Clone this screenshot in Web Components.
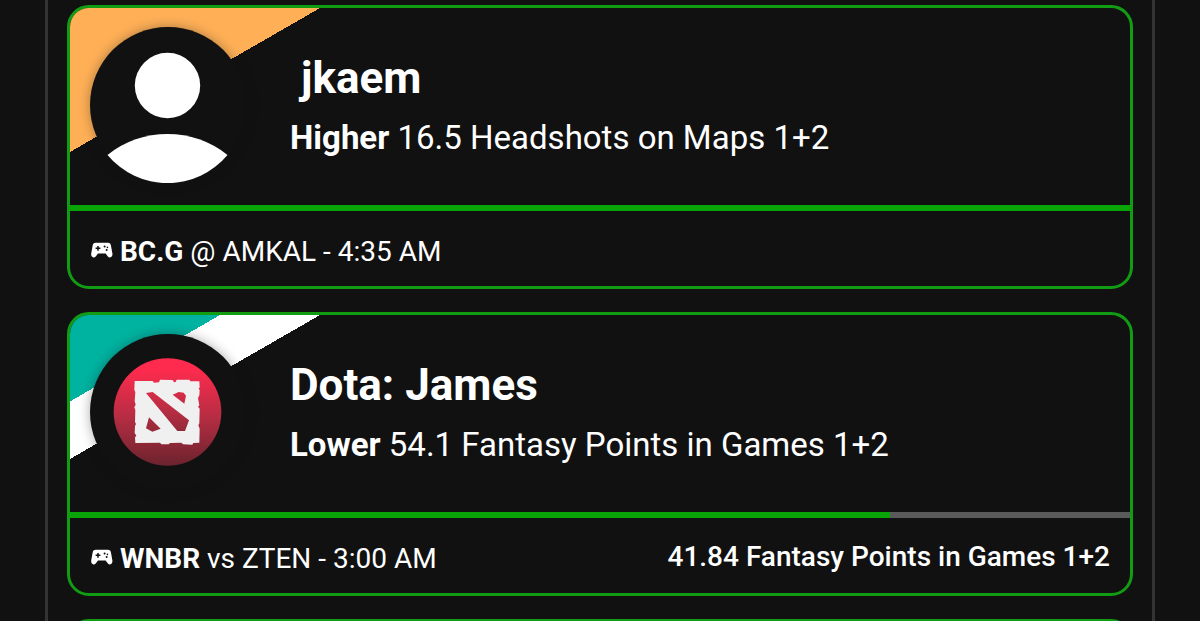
<!DOCTYPE html>
<html lang="en">
<head>
<meta charset="utf-8">
<title>Picks</title>
<style>
    body {
        margin: 0;
        height: 100vh;
        overflow: hidden;
        background: #111;
        color: #fff;
        font-family: Roboto, "Liberation Sans", sans-serif;
    }
</style>
</head>
<body>
<pick-list>
    <pick-card style="--banner: #ffb057; --banner-alt: #ffb057">
        <user-avatar slot="avatar"></user-avatar>
        <span slot="name">&nbsp;jkaem</span>
        <b slot="choice">Higher</b>
        <span slot="line">16.5 Headshots on Maps 1+2</span>
        <match-info slot="match"><b>BC.G</b> @ AMKAL - 4:35 AM</match-info>
    </pick-card>
    <pick-card value="41.84" max="54.1" style="--banner: #00b3a1; --banner-alt: #fff">
        <dota-avatar slot="avatar"></dota-avatar>
        <span slot="name">Dota: James</span>
        <b slot="choice">Lower</b>
        <span slot="line">54.1 Fantasy Points in Games 1+2</span>
        <match-info slot="match"><b>WNBR</b> vs ZTEN - 3:00 AM</match-info>
        <span slot="result">41.84 Fantasy Points in Games 1+2</span>
    </pick-card>
    <pick-card></pick-card>
</pick-list>

<script>
class PickList extends HTMLElement {
    constructor(){
        super();
        this.attachShadow({mode: 'open'});
        this.shadowRoot.innerHTML = `
            <style>
                :host {
                    display: flex;
                    flex-direction: column;
                    gap: 23px;
                    margin: 0 45px;
                    padding: 5px 19px;
                    border: solid #333;
                    border-width: 0 3px;
                }
            </style>
            <slot></slot>
        `;
    }
}

class PickCard extends HTMLElement {
    constructor(){
        super();
        this.attachShadow({mode: 'open'});
        this.shadowRoot.innerHTML = `
            <style>
                :host {
                    display: block;
                    overflow: hidden;
                    border: 3px solid #129c14;
                    border-radius: 22px;
                }

                #head {
                    display: flex;
                    align-items: center;
                    gap: 44px;
                    padding: 19px 20px 22px;
                    background: linear-gradient(to bottom right, var(--banner, transparent) 30%, var(--banner-alt, transparent) 30% 50%, transparent 50%) no-repeat 0 0 / 250px 144px;
                }

                #avatar {
                    flex: none;
                    width: 156px;
                    height: 156px;
                    border-radius: 50%;
                    background: #111;
                    box-shadow: 0 0 12px rgba(17, 17, 17, 0.35);
                }

                #text {
                    display: flex;
                    flex-direction: column;
                    gap: 14px;
                }

                h2 {
                    margin: 0;
                    font-size: 44px;
                    line-height: 52px;
                    font-weight: 700;
                }

                p {
                    margin: 0;
                    font-size: 33px;
                    line-height: 40px;
                }

                progress {
                    display: block;
                    appearance: none;
                    width: 100%;
                    height: 6px;
                    border: 0;
                }

                progress::-webkit-progress-bar {
                    background: #5a5a5a;
                }

                progress::-webkit-progress-value {
                    background: #08a408;
                }

                footer {
                    display: flex;
                    justify-content: space-between;
                    align-items: flex-start;
                    padding: 24px 20px 18px;
                    font-size: 28px;
                    line-height: 33px;
                }

                #result {
                    font-weight: 500;
                    line-height: 30px;
                }
            </style>
            <div id="head">
                <div id="avatar"><slot name="avatar"></slot></div>
                <div id="text">
                    <h2><slot name="name"></slot></h2>
                    <p><slot name="choice"></slot> <slot name="line"></slot></p>
                </div>
            </div>
            <progress aria-label="Progress"></progress>
            <footer>
                <slot name="match"></slot>
                <div id="result"><slot name="result"></slot></div>
            </footer>
        `;
    }

    connectedCallback(){
        const bar = this.shadowRoot.querySelector('progress');
        bar.max = this.getAttribute('max') || 1;
        bar.value = this.getAttribute('value') || 1;
    }
}

class UserAvatar extends HTMLElement {
    constructor(){
        super();
        this.attachShadow({mode: 'open'});
        this.shadowRoot.innerHTML = `
            <style>
                :host, svg {
                    display: block;
                }
            </style>
            <svg viewBox="0 0 156 156" fill="#fff">
                <circle cx="77.5" cy="58.5" r="32.7"/>
                <path d="M17.5 128A96 96 0 0 1 137.5 128A78 78 0 0 1 17.5 128Z"/>
            </svg>
        `;
    }
}

class DotaAvatar extends HTMLElement {
    constructor(){
        super();
        this.attachShadow({mode: 'open'});
        this.shadowRoot.innerHTML = `
            <style>
                :host, svg {
                    display: block;
                }
            </style>
            <svg viewBox="-30 -48 468 468">
                <defs>
                    <linearGradient id="red" x1="0" y1="0" x2="0" y2="1">
                        <stop offset="0.1" stop-color="#ff2b4e"/>
                        <stop offset="0.55" stop-color="#b52d42"/>
                        <stop offset="1" stop-color="#6b232d"/>
                    </linearGradient>
                    <linearGradient id="hole" gradientUnits="userSpaceOnUse" x1="0" y1="126" x2="0" y2="245">
                        <stop offset="0" stop-color="#d82c48"/>
                        <stop offset="0.5" stop-color="#b52d42"/>
                        <stop offset="1" stop-color="#932a39"/>
                    </linearGradient>
                </defs>
                <circle cx="202.5" cy="186" r="161.5" fill="url(#red)"/>
                <path fill="#f0f0f0" d="M104 93L158 93L162 98L177 97L180 89L218 90L222 97L227 96L230 89L268 89L271 94L298 94L299 112L296 116L299 120L298 136L294 144L298 166L294 170L299 176L298 220L295 226L299 236L298 278L280 279L277 284L249 283L244 278L210 279L206 283L184 283L180 278L106 279L105 262L109 257L104 249L105 228L108 222L105 216L106 180L103 172L107 164L104 154L106 126L103 120Z"/>
                <g fill="url(#hole)">
                    <path d="M138 129L158 126L267 211L255 243L232 243Z"/>
                    <path d="M218 134L236 126L251 128L258 137L253 161Z"/>
                    <path d="M147 202L182 236L157 245L138 235Z"/>
                </g>
            </svg>
        `;
    }
}

class MatchInfo extends HTMLElement {
    constructor(){
        super();
        this.attachShadow({mode: 'open'});
        this.shadowRoot.innerHTML = `
            <style>
                :host {
                    display: flex;
                    gap: 7px;
                }

                svg {
                    flex: none;
                    width: 23px;
                    height: 16px;
                    margin-top: 7px;
                }
            </style>
            <svg viewBox="0 0 23 16" aria-hidden="true">
                <path fill="#fff" d="M5.6 .8H18C19.8 .8 20.7 1.8 21 3.8L22.4 11.6C22.7 14 21.6 15.4 20 15.4C19 15.4 18.3 15 17.7 14.2L15.6 11.6H8L5.9 14.2C5.3 15 4.6 15.4 3.6 15.4C2 15.4 .9 14 1.2 11.6L2.6 3.8C2.9 1.8 3.8 .8 5.6 .8Z"/>
                <path stroke="#111" stroke-width="1.5" d="M8 3.9V8.7M5.6 6.3H10.4"/>
                <circle cx="14.6" cy="4.4" r="1" fill="#111"/>
                <circle cx="17.4" cy="5.4" r=".8" fill="#111"/>
                <circle cx="16.6" cy="8" r="1" fill="#111"/>
            </svg>
            <span><slot></slot></span>
        `;
    }
}

customElements.define('pick-list', PickList);
customElements.define('pick-card', PickCard);
customElements.define('user-avatar', UserAvatar);
customElements.define('dota-avatar', DotaAvatar);
customElements.define('match-info', MatchInfo);
</script>
</body>
</html>
